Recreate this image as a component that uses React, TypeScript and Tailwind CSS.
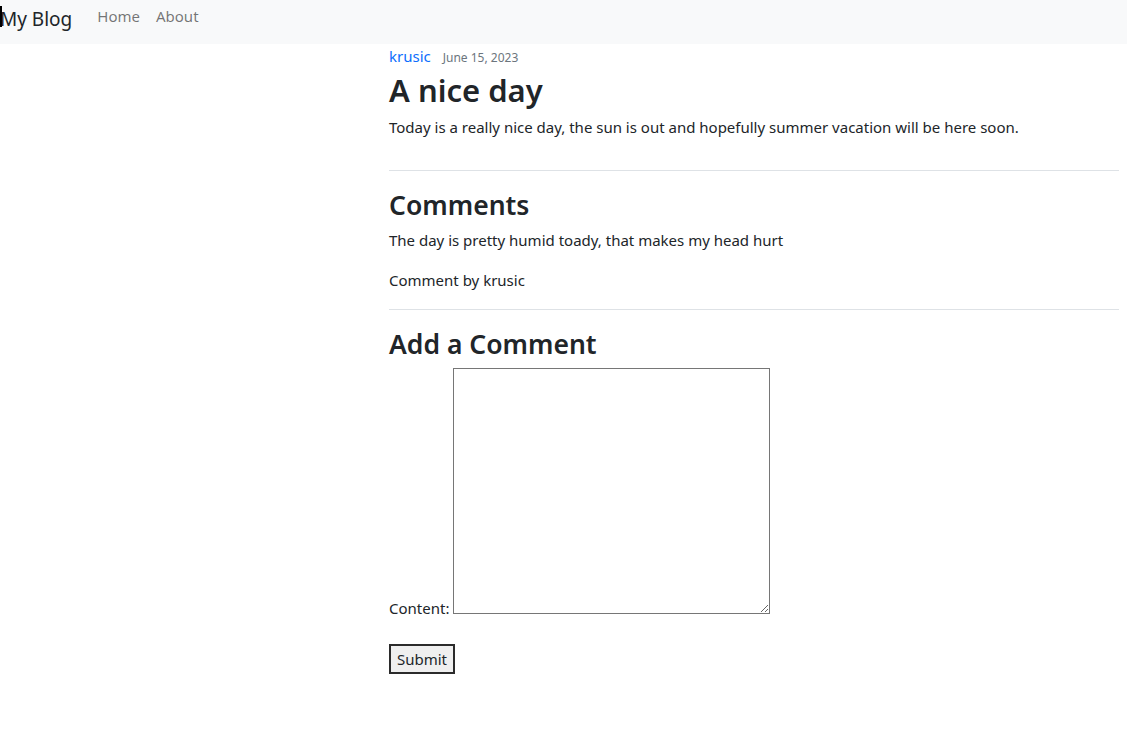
export default function App() {
  return (
    <div className="min-h-screen bg-white font-['Segoe_UI','Noto_Sans',sans-serif] text-[15px] text-[#212529]">
      <nav className="flex h-[44px] items-start bg-[#f8f9fa] pt-[4px]">
        <a href="#" className="relative text-[19px] leading-[30px] text-[#212529]">
          <span className="absolute left-0 top-[2px] h-[21px] w-[2px] bg-black" />
          My Blog
        </a>
        <div className="ml-[25px] flex gap-[16px] leading-[24px] text-[rgba(0,0,0,0.55)]">
          <a href="#">Home</a>
          <a href="#">About</a>
        </div>
      </nav>

      <main className="pl-[389px] pr-[8px]">
        <div className="flex items-baseline gap-[12px] leading-[24px]">
          <a href="#" className="text-[#0d6efd]">krusic</a>
          <small className="text-[12px] text-[#6c757d]">June 15, 2023</small>
        </div>
        <h1 className="text-[31px] font-semibold leading-[40px]">A nice day</h1>
        <p className="mt-[5px] leading-[24px]">
          Today is a really nice day, the sun is out and hopefully summer vacation will be here soon.
        </p>

        <hr className="mt-[31px] mb-[18px] border-t border-[#dee2e6]" />

        <h2 className="text-[26.5px] font-semibold leading-[32px]">Comments</h2>
        <p className="mt-[7px] leading-[24px]">The day is pretty humid toady, that makes my head hurt</p>
        <p className="mt-[16px] leading-[24px]">Comment by krusic</p>

        <hr className="mt-[17px] mb-[18px] border-t border-[#dee2e6]" />

        <h2 className="text-[26.5px] font-semibold leading-[32px]">Add a Comment</h2>
        <form className="mt-[8px] flex flex-col items-start">
          <label className="flex items-end gap-[4px]">
            <span className="leading-[12px]">Content:</span>
            <textarea className="block h-[246px] w-[317px] border border-[#767676] bg-white" />
          </label>
          <button
            type="button"
            className="mt-[30px] h-[30px] w-[66px] border-2 border-[#2b2b2b] bg-[#efefef] leading-[24px]"
          >
            Submit
          </button>
        </form>
      </main>
    </div>
  );
}
